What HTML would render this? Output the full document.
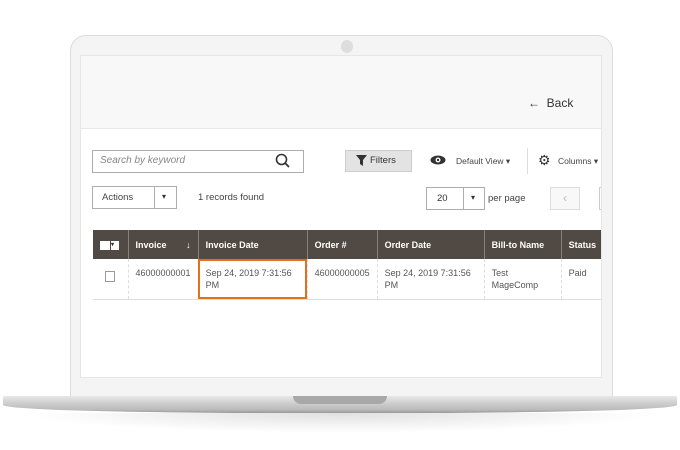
<!DOCTYPE html>
<html><head><style>
*{margin:0;padding:0;box-sizing:border-box}
body{width:680px;height:450px;background:#fff;position:relative;overflow:hidden;font-family:"Liberation Sans",sans-serif;color:#333}
.abs{position:absolute}
.lid{left:70px;top:35px;width:543px;height:365px;background:#f4f4f4;border:1px solid #dcdcdc;border-radius:16px 16px 0 0}
.cam{left:341px;top:40px;width:12px;height:13px;border-radius:50%;background:#ddd}
.screen{left:80px;top:55px;width:522px;height:323px;background:#fff;overflow:hidden;border:1px solid #e6e6e6}
.hdr{left:0;top:0;width:522px;height:73px;background:#f8f8f8;border-bottom:1px solid #e8e8e8}
.t{font-size:10px;white-space:nowrap}
.box{border:1px solid #adadad;background:#fff}
table{border-collapse:collapse;font-size:9px}
th{background:#514943;color:#fff;text-align:left;font-weight:bold;height:29px;padding:0 7px;border-left:1px solid #8a817b}
td{vertical-align:top;padding:8px 7px 0;height:40px;color:#555;border-left:1px dashed #ddd;border-bottom:1px solid #ddd;line-height:12px}
.base{left:3px;top:396px;width:674px;height:17px;background:linear-gradient(#e8e8e8,#cfcfcf 40%,#bbb 80%,#999);border-radius:2px 2px 40% 40%/2px 2px 8px 8px}
.notch{left:293px;top:396px;width:94px;height:8px;background:#a8a8a8;border-radius:0 0 8px 8px}
.shadow{left:20px;top:413px;width:640px;height:20px;background:radial-gradient(ellipse at top,rgba(0,0,0,.12),rgba(0,0,0,0) 70%)}
</style></head><body>
<div class="abs shadow"></div>
<div class="abs lid"></div>
<div class="abs cam"></div>
<div class="abs screen">
 <div class="abs hdr"></div>
 <div class="abs t" style="left:447px;top:40px;font-size:12px;color:#333">&#8592;&nbsp; Back</div>
 <div class="abs box" style="left:11px;top:94px;width:212px;height:23px"></div>
 <div class="abs t" style="left:19px;top:99px;font-style:italic;color:#888">Search by keyword</div>
 <svg class="abs" style="left:194px;top:97px" width="16" height="16"><circle cx="6.5" cy="6.5" r="5" fill="none" stroke="#333" stroke-width="1.6"/><line x1="10" y1="10" x2="14" y2="14" stroke="#333" stroke-width="1.8"/></svg>
 <div class="abs" style="left:264px;top:94px;width:67px;height:22px;background:#e3e3e3;border:1px solid #ccc"></div>
 <svg class="abs" style="left:275px;top:99px" width="11" height="11"><path d="M0 0H11L7 5V11L4 9V5Z" fill="#333"/></svg>
 <div class="abs t" style="left:289px;top:99px;font-size:9.5px">Filters</div>
 <svg class="abs" style="left:349px;top:99px" width="16" height="10"><ellipse cx="8" cy="5" rx="7.5" ry="4.5" fill="#333"/><circle cx="8" cy="5" r="2.5" fill="#fff"/><circle cx="8" cy="5" r="1.2" fill="#333"/></svg>
 <div class="abs t" style="left:375px;top:100px;font-size:8.5px;color:#444">Default View ▾</div>
 <div class="abs" style="left:446px;top:92px;width:1px;height:26px;background:#ddd"></div>
 <div class="abs t" style="left:457px;top:96px;font-size:14px">&#9881;</div>
 <div class="abs t" style="left:477px;top:100px;font-size:8.5px;color:#444">Columns ▾</div>
 <div class="abs box" style="left:11px;top:130px;width:85px;height:23px"></div>
 <div class="abs" style="left:73px;top:130px;width:1px;height:23px;background:#adadad"></div>
 <div class="abs t" style="left:21px;top:136px;font-size:9.5px;color:#444">Actions</div>
 <div class="abs t" style="left:81px;top:136px;font-size:8px">▾</div>
 <div class="abs t" style="left:117px;top:136px;font-size:9.5px;color:#444">1 records found</div>
 <div class="abs box" style="left:345px;top:131px;width:59px;height:23px"></div>
 <div class="abs" style="left:382px;top:131px;width:1px;height:23px;background:#adadad"></div>
 <div class="abs t" style="left:356px;top:137px;font-size:9.5px">20</div>
 <div class="abs t" style="left:390px;top:137px;font-size:8px">▾</div>
 <div class="abs t" style="left:407px;top:137px;font-size:9.5px;color:#444">per page</div>
 <div class="abs" style="left:469px;top:131px;width:30px;height:23px;border:1px solid #ddd;background:#f8f8f8;color:#bbb;font-size:12px;text-align:center;line-height:20px">&lsaquo;</div>
 <div class="abs" style="left:518px;top:131px;width:10px;height:23px;border:1px solid #ccc"></div>
 <table class="abs" style="left:12px;top:174px;width:530px">
  <tr><th style="width:35px;border-left:none"><span style="display:inline-block;width:10px;height:9px;background:#fff;vertical-align:middle"></span><span style="display:inline-block;width:8px;height:9px;background:#fff;color:#333;font-size:6px;line-height:9px;vertical-align:middle;margin-left:1px">▾</span></th><th style="width:70px">Invoice <span style="float:right">&#8595;</span></th><th style="width:109px">Invoice Date</th><th style="width:69px">Order #</th><th style="width:107px">Order Date</th><th style="width:77px">Bill-to Name</th><th>Status</th></tr>
  <tr><td style="border-left:none;padding-top:12px;padding-left:12px"><span style="display:inline-block;width:10px;height:11px;border:1px solid #999"></span></td><td>46000000001</td><td style="outline:2px solid #e07020;outline-offset:-2px">Sep 24, 2019 7:31:56<br>PM</td><td>46000000005</td><td>Sep 24, 2019 7:31:56<br>PM</td><td>Test<br>MageComp</td><td>Paid</td></tr>
 </table>
</div>
<div class="abs base"></div>
<div class="abs notch"></div>
</body></html>
